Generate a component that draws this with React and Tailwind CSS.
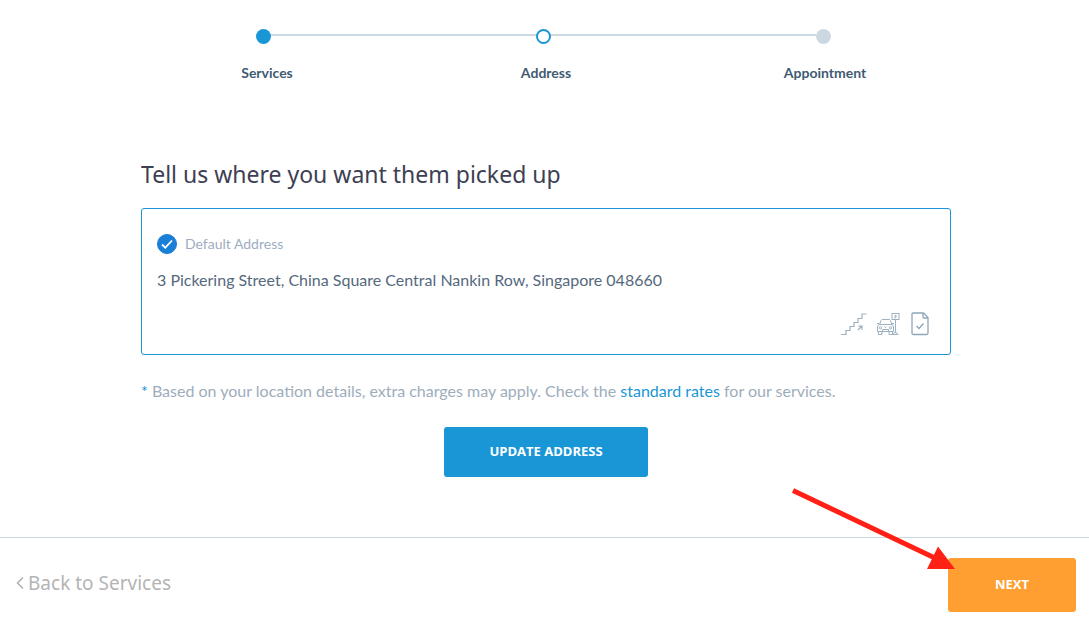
import { useState } from 'react';

const STEPS = [
    { label: 'Services', status: 'done' },
    { label: 'Address', status: 'current' },
    { label: 'Appointment', status: 'upcoming' },
];

const DOT_STYLES = {
    done: 'bg-[#1896d6]',
    current: 'border-2 border-[#1896d6] bg-white',
    upcoming: 'bg-[#cbd8e2]',
};

const StairsIcon = () => (
    <svg width="26" height="24" viewBox="0 0 26 24" fill="none" stroke="#9fb0bf" strokeWidth="1.2" aria-label="Stairs" role="img">
        <path d="M0 22.500h5v-4h4v-4h4v-4h4v-4h4v-4.500h4.500" />
        <path d="M17 18l4-4M17.500 14.200H21v3.600" />
    </svg>
);

const ParkingIcon = () => (
    <svg width="24" height="24" viewBox="0 0 24 24" fill="none" stroke="#9fb0bf" strokeWidth="1" aria-label="Parking" role="img">
        <path d="M2.500 13l1.500-4.500Q4.500 7.500 5.500 7.500h6.500q1 0 1.500 1l1.500 4.500" />
        <path d="M0 11.500h2.500M15 11.500h2M2.500 12.500h12.500q1.500.5 1.500 2.500v4.500H.5V15q0-2 2-2.500z" />
        <path d="M1.500 19.500v3H5v-3M12 19.500v3h3.500v-3M5.500 17.500h6v2h-6z" />
        <circle cx="3.500" cy="15.800" r="1.200" />
        <circle cx="13.500" cy="15.800" r="1.200" />
        <path d="M7.500 14.500l1 1.200 1-1.200" />
        <rect x="15" y="1.500" width="7" height="6" />
        <path d="M18 6.500V3.500h1q1 .8 0 1.600h-1M18.500 7.500v13M16 22.500l1.500-2h2l1.500 2z" />
    </svg>
);

const DocumentIcon = () => (
    <svg width="18" height="24" viewBox="0 0 18 24" fill="none" stroke="#8fa6b8" strokeWidth="1.3" aria-label="Document" role="img">
        <path d="M2 1h10.500L17 5.500V21q0 1.500-1.500 1.500H2.500Q1 22.500 1 21V2q0-1 1-1z" />
        <path d="M12 1v4q0 1 1 1h4" />
        <path d="M5.500 14l2.500 2.500 4.500-5" />
    </svg>
);

const Stepper = () => (
    <div>
        <div className="mx-auto flex max-w-[577px] items-center pr-0.5">
            {STEPS.map((step, i) => (
                <div key={step.label} className={i > 0 ? 'flex flex-1 items-center' : 'flex items-center'}>
                    {i > 0 && <div className="mb-[3px] h-0.5 flex-1 bg-[#cbd8e2]" />}
                    <div className={`size-[15px] rounded-full ${DOT_STYLES[step.status]}`} />
                </div>
            ))}
        </div>
        <ol className="mx-auto mt-[19px] grid max-w-[840px] grid-cols-3 pl-[3px] text-center text-sm font-bold text-[#3f5b73]">
            {STEPS.map((step) => (
                <li key={step.label} aria-current={step.status === 'current' ? 'step' : undefined}>{step.label}</li>
            ))}
        </ol>
    </div>
);

const AddressCard = ({ checked, onChange }) => (
    <div className="rounded-[3px] border border-[#1896d6] px-[15px] pt-[25px] pb-[18px]">
        <label className="flex items-center gap-2 text-sm text-[#9dadbf]">
            <span className="grid size-5">
                <input
                    type="checkbox"
                    checked={checked}
                    onChange={onChange}
                    className="col-start-1 row-start-1 size-5 appearance-none rounded-full border border-[#1a7fd6] checked:bg-[#1a7fd6]"
                />
                {checked && (
                    <svg className="pointer-events-none col-start-1 row-start-1" width="20" height="20" viewBox="0 0 20 20" fill="none" stroke="white" strokeWidth="1.8">
                        <path d="M5 10.500l3.300 3.200L15 6.500" />
                    </svg>
                )}
            </span>
            Default Address
        </label>
        <p className="mt-3.5 text-base text-[#54697d]">
            3 Pickering Street, China Square Central Nankin Row, Singapore 048660
        </p>
        <div className="mt-5 flex justify-end gap-2.5 pr-1.5">
            <StairsIcon />
            <ParkingIcon />
            <DocumentIcon />
        </div>
    </div>
);

const App = () => {
    const [isDefault, setIsDefault] = useState(true);

    return (
        <div className="bg-white font-[Lato,sans-serif]">
            <main className="px-4 pt-[29px]">
                <Stepper />

                <section className="mx-auto mt-[75px] max-w-[813px] pl-[3px]">
                    <h1 className="mb-[18px] font-['Noto_Sans',sans-serif] text-[23px] leading-8 text-[#3d4053]">
                        Tell us where you want them picked up
                    </h1>

                    <AddressCard checked={isDefault} onChange={(e) => setIsDefault(e.target.checked)} />

                    <p className="mt-6 text-base text-[#9dadbb]">
                        <span className="text-[#1896d6]">*</span> Based on your location details, extra charges may apply. Check the{' '}
                        <a href="#rates" className="text-[#1896d6]">standard rates</a> for our services.
                    </p>

                    <div className="mt-6 flex justify-center">
                        <button type="button" className="h-[50px] w-[204px] rounded-[3px] bg-[#1896d6] font-['Open_Sans',sans-serif] text-[13px] font-bold text-white">
                            UPDATE ADDRESS
                        </button>
                    </div>
                </section>
            </main>

            <footer className="relative mt-[60px] flex items-center justify-between border-t border-[#cbd8e2] pt-5 pr-[13px] pb-2 pl-4">
                <a href="#services" className="flex items-center gap-1 pb-1 font-['Noto_Sans',sans-serif] text-[19px] text-[#b4b4b4]">
                    <svg width="8" height="14" viewBox="0 0 8 14" fill="none" stroke="currentColor" strokeWidth="1.6">
                        <path d="M7 1.500L1.500 7 7 12.500" />
                    </svg>
                    Back to Services
                </a>
                <button type="button" className="h-[54px] w-32 rounded-[3px] bg-[#ff9f31] font-['Open_Sans',sans-serif] text-[13px] font-bold text-white">
                    NEXT
                </button>

                {/* Pointer to the next action */}
                <svg className="pointer-events-none absolute -top-[51px] right-[133px]" width="166" height="84" viewBox="0 0 166 84" aria-hidden="true">
                    <path d="M3 3.500L147 72" stroke="#ff2115" strokeWidth="5" />
                    <path d="M148 59.500L165 82H137z" fill="#ff2115" />
                </svg>
            </footer>
        </div>
    );
};

export default App;
